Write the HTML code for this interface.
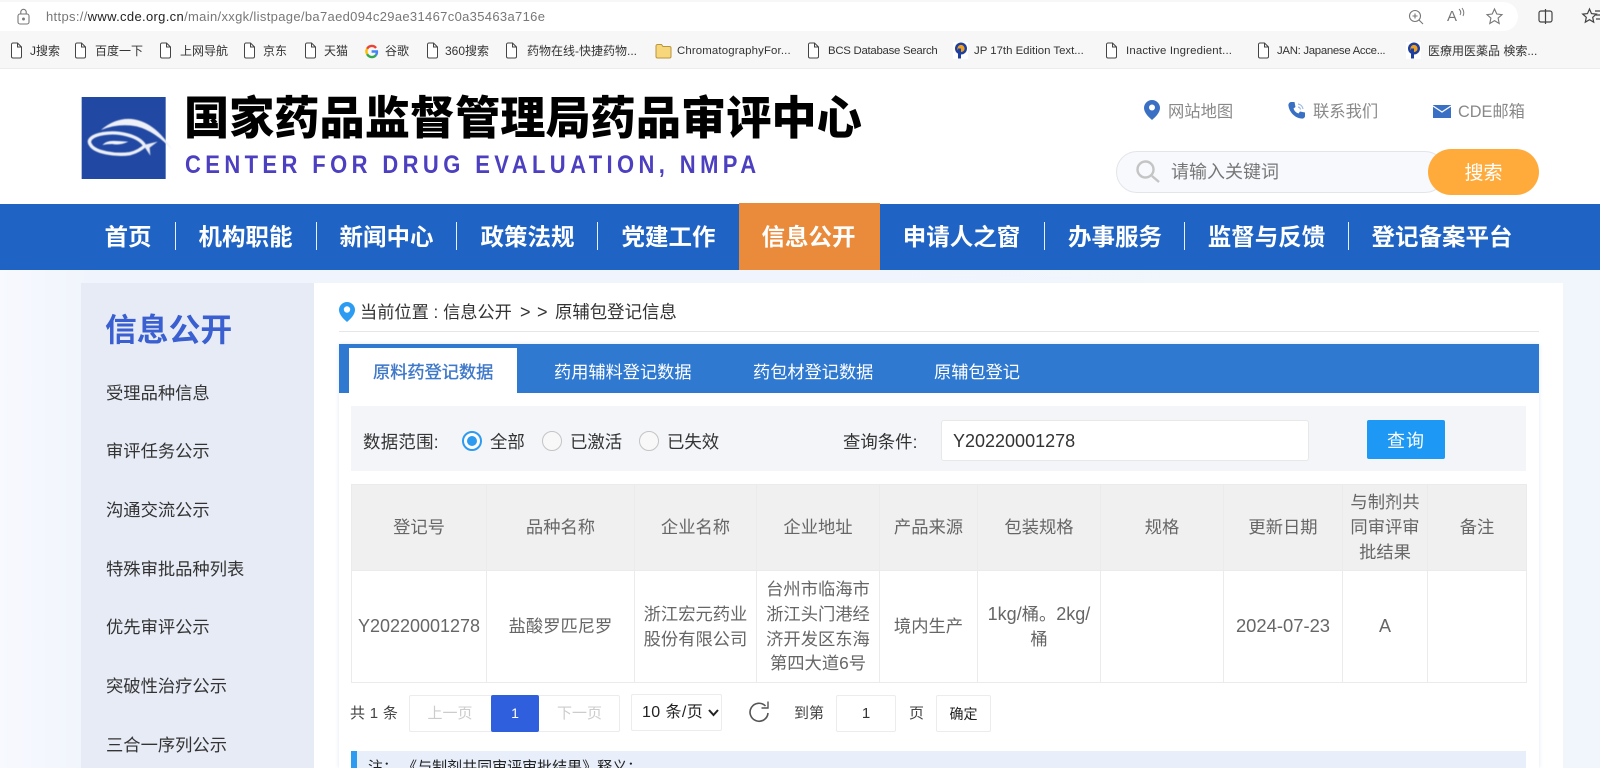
<!DOCTYPE html>
<html lang="zh-CN"><head><meta charset="utf-8"><title>国家药品监督管理局药品审评中心</title>
<style>
*{box-sizing:border-box}
html,body{margin:0;padding:0;width:1600px;height:768px;overflow:hidden;background:#fff}
body{position:relative;font-family:"Liberation Sans","Noto Sans CJK SC",sans-serif;color:#333}
.a{position:absolute;white-space:nowrap;line-height:24px}
.b{position:absolute}
svg{position:absolute;overflow:visible}
.bm{font-size:12px;color:#333;top:39px}
.nav{font-size:23.5px;font-weight:700;color:#fff;top:221px;line-height:32px;text-align:center;transform:translateX(-50%)}
.sep{position:absolute;width:1px;height:28px;top:222px;background:#e8f0fb}
.side{font-size:17.3px;left:106px;color:#333}
.tab{font-size:17.2px;color:#fff;top:359.5px}
.flt{font-size:17.4px;color:#333;top:430px}
table{position:absolute;left:351px;top:484px;width:1175px;height:198px;border-collapse:collapse;table-layout:fixed;font-size:17.3px;color:#666;line-height:24.7px;text-align:center}
td,th{border:1px solid #ebebeb;padding:0;font-weight:400;vertical-align:middle}
th{background:#f0f0f0;height:86px}
td{background:#fff;height:112px}
td .l{font-size:18px}
.box{position:absolute;background:#fff;border:1px solid #ececec;border-radius:2px}
.pg{font-size:15px;color:#444;top:702px}
</style></head><body>

<!-- browser chrome -->
<div class="b" style="left:0;top:0;width:1600px;height:69px;background:#f7f7f7;border-bottom:1px solid #ececec"></div>
<div class="b" style="left:-20px;top:2px;width:1538px;height:29px;background:#fff;border-radius:15px"></div>
<svg style="left:17px;top:9px" width="13" height="16" fill="none" stroke="#777" stroke-width="1.1"><rect x="1" y="5" width="11" height="10" rx="2"/><path d="M3.8 5V3a2.7 2.7 0 0 1 5.4 0v2"/><circle cx="6.5" cy="10" r=".9" fill="#777"/></svg>
<div class="a" style="left:46px;top:5px;font-size:13px;color:#777;letter-spacing:.33px">https://<span style="color:#222">www.cde.org.cn</span>/main/xxgk/listpage/ba7aed094c29ae31467c0a35463a716e</div>
<svg style="left:1408px;top:9px" width="16" height="16" fill="none" stroke="#777" stroke-width="1.1"><circle cx="7" cy="7" r="5.5"/><path d="M11 11l4 4M7 4.5v5M4.5 7h5"/></svg>
<div class="a" style="left:1447px;top:5px;font-size:15px;color:#777">A</div>
<svg style="left:1458px;top:8px" width="8" height="10" fill="none" stroke="#777"><path d="M1 1q3 3 1 6M4 0q3 4 1 8"/></svg>
<svg style="left:1486px;top:8px" width="17" height="17" fill="none" stroke="#777" stroke-width="1.1"><path d="M8.5 1l2.3 5 5.2.6-3.9 3.5 1.1 5.4-4.7-2.8-4.7 2.8 1.1-5.400L1 6.600 6.200 6z"/></svg>
<svg style="left:1538px;top:9px" width="15" height="15" fill="none" stroke="#444" stroke-width="1.2"><rect x="1" y="2" width="13" height="11" rx="2"/><path d="M7.5 0v15"/></svg>
<svg style="left:1582px;top:8px" width="18" height="17" fill="none" stroke="#444" stroke-width="1.2"><path d="M7.5 1l2 4.6 4.8.5-3.600 3.200 1 4.900-4.200-2.500-4.200 2.500 1-4.900L.7 6.100l4.800-.5z"/><path d="M13 3h5M14 7h4M14 11h4"/></svg>

<svg width="0" height="0" style="left:0;top:0"><defs><g id="f"><path d="M1.5 2.500a1.500 1.500 0 0 1 1.500-1.500h4.500l4 4v9.500a1.500 1.500 0 0 1-1.500 1.500h-7a1.500 1.500 0 0 1-1.500-1.500z M7.500 1v4h4" fill="#fff" stroke="#444" stroke-width="1"/></g>
<g id="p"><rect width="15" height="17" fill="#fff"/><circle cx="8" cy="6.500" r="6" fill="#1f3f9c"/><circle cx="8" cy="6.500" r="3.600" fill="#f0a020"/><path d="M6.500 6.500v10" stroke="#1f3f9c" stroke-width="3"/></g>
<filter id="bl" x="-10%" y="-10%" width="120%" height="120%"><feGaussianBlur stdDeviation="1.600"/></filter></defs></svg>

<svg style="left:10px;top:42px" width="14" height="18"><use href="#f"/></svg><div class="a bm" style="left:30px">J搜索</div>
<svg style="left:74px;top:42px" width="14" height="18"><use href="#f"/></svg><div class="a bm" style="left:95px">百度一下</div>
<svg style="left:159px;top:42px" width="14" height="18"><use href="#f"/></svg><div class="a bm" style="left:180px">上网导航</div>
<svg style="left:243px;top:42px" width="14" height="18"><use href="#f"/></svg><div class="a bm" style="left:263px">京东</div>
<svg style="left:304px;top:42px" width="14" height="18"><use href="#f"/></svg><div class="a bm" style="left:324px">天猫</div>
<svg style="left:365px;top:45px" width="13" height="13" fill="none" stroke-width="2.4"><path d="M11 3A5.2 5.2 0 0 0 2.2 3.8" stroke="#ea4335"/><path d="M2.2 3.8a5.2 5.2 0 0 0 0 5.4" stroke="#fbbc05"/><path d="M2.2 9.2A5.2 5.2 0 0 0 11 10" stroke="#34a853"/><path d="M11 10a5 5 0 0 0 .9-3.5H6.6" stroke="#4285f4"/></svg><div class="a bm" style="left:385px">谷歌</div>
<svg style="left:426px;top:42px" width="14" height="18"><use href="#f"/></svg><div class="a bm" style="left:445px">360搜索</div>
<svg style="left:505px;top:42px" width="14" height="18"><use href="#f"/></svg><div class="a bm" style="left:527px">药物在线-快捷药物...</div>
<svg style="left:655px;top:43px" width="17" height="16"><path d="M1 3a1.5 1.5 0 0 1 1.5-1.5h4L8 3.5h6.5A1.5 1.5 0 0 1 16 5v8.500a1.500 1.500 0 0 1-1.500 1.500h-12A1.500 1.500 0 0 1 1 13.500z" fill="#f6d77c" stroke="#b9963c"/></svg><div class="a bm" style="left:677px;font-size:11.4px;letter-spacing:.15px">ChromatographyFor...</div>
<svg style="left:807px;top:42px" width="14" height="18"><use href="#f"/></svg><div class="a bm" style="left:828px;font-size:11.4px;letter-spacing:-.27px">BCS Database Search</div>
<svg style="left:953px;top:42px" width="15" height="18"><use href="#p"/></svg><div class="a bm" style="left:974px;font-size:11.4px">JP 17th Edition Text...</div>
<svg style="left:1105px;top:42px" width="14" height="18"><use href="#f"/></svg><div class="a bm" style="left:1126px;font-size:11.4px;letter-spacing:.16px">Inactive Ingredient...</div>
<svg style="left:1257px;top:42px" width="14" height="18"><use href="#f"/></svg><div class="a bm" style="left:1277px;font-size:11.4px;letter-spacing:-.3px">JAN: Japanese Acce...</div>
<svg style="left:1406px;top:42px" width="15" height="18"><use href="#p"/></svg><div class="a bm" style="left:1428px">医療用医薬品 検索...</div>

<!-- header -->
<svg style="left:75px;top:95px" width="100" height="90" viewBox="0 0 300 270">
<rect x="20" y="6" width="252" height="246" fill="#2148a2"/>
<g filter="url(#bl)">
<path d="M78 105Q120 68 170 72Q240 80 292 165Q240 108 185 94Q130 84 78 105z" fill="#eef1f8"/>
<path d="M208 150C190 122 130 108 85 116C50 122 36 135 47 150C60 172 120 182 165 176C185 171 200 162 212 150" fill="none" stroke="#eef1f8" stroke-width="10"/>
<path d="M205 150L248 140L224 158L226 182z" fill="#e8ecf6"/>
<path d="M82 150Q95 135 125 138L160 140Q135 152 112 147Q95 147 82 150z" fill="#f3f5fb"/>
</g>
</svg>
<div class="a" style="left:184px;top:89px;font-size:45.2px;line-height:60px;font-weight:900;color:#000">国家药品监督管理局药品审评中心</div>
<svg style="left:185px;top:150px" width="580" height="30"><text transform="scale(.88,1)" x="0" y="23" font-family="Liberation Sans" font-weight="700" font-size="25" fill="#4c3fc0" textLength="649" lengthAdjust="spacing">CENTER FOR DRUG EVALUATION, NMPA</text></svg>

<svg style="left:1144px;top:100px" width="16" height="20"><path d="M8 0a8 8 0 0 1 8 8c0 4.5-4.5 9-8 12-3.500-3-8-7.500-8-12a8 8 0 0 1 8-8z" fill="#3a70c4"/><circle cx="8" cy="7.500" r="3" fill="#fff"/></svg>
<div class="a" style="left:1168px;top:99.5px;font-size:16.3px;color:#888">网站地图</div>
<svg style="left:1288px;top:101px" width="18" height="19"><path d="M3 1l3.500 0 1 5-2 1.500c.8 2.500 2.500 4.200 5 5l1.500-2 5 1v3.500c0 1.500-1.500 3-3.500 2.500C7 17 1.500 11.500.5 5 0 3 1.500 1 3 1z" fill="#3a70c4"/><path d="M10 3a6 6 0 0 1 5 5M10 6a3 3 0 0 1 2.500 2.500" fill="none" stroke="#9db9e4" stroke-width="1.200"/></svg>
<div class="a" style="left:1313px;top:99.5px;font-size:16.3px;color:#888">联系我们</div>
<svg style="left:1433px;top:105px" width="18" height="13"><rect width="18" height="13" fill="#3a70c4"/><path d="M0 1l9 6 9-6" fill="none" stroke="#fff" stroke-width="1.300"/></svg>
<div class="a" style="left:1458px;top:99.5px;font-size:16.3px;color:#888">CDE邮箱</div>

<div class="b" style="left:1116px;top:151px;width:330px;height:42px;background:#f7f9fd;border:1px solid #e3e5ea;border-radius:21px"></div>
<svg style="left:1136px;top:160px" width="24" height="23" fill="none" stroke="#c4c4c4"><circle cx="9.500" cy="9.500" r="8" stroke-width="2.400"/><path d="M16 16l7 6" stroke-width="2.400"/></svg>
<div class="a" style="left:1171px;top:160px;font-size:18px;color:#777">请输入关键词</div>
<div class="b" style="left:1428px;top:149px;width:111px;height:46px;background:#ffab3c;border-radius:23px;color:#fff;font-size:19px;line-height:49px;text-align:center">搜索</div>

<!-- nav -->
<div class="b" style="left:0;top:204px;width:1600px;height:66px;background:#1f63c4"></div>
<div class="b" style="left:739px;top:203px;width:141px;height:67px;background:#ea8a3b"></div>
<div class="sep" style="left:175px"></div><div class="sep" style="left:316px"></div><div class="sep" style="left:456px"></div><div class="sep" style="left:597px"></div><div class="sep" style="left:1044px"></div><div class="sep" style="left:1184px"></div><div class="sep" style="left:1348px"></div>
<div class="a nav" style="left:128px">首页</div>
<div class="a nav" style="left:245.5px">机构职能</div>
<div class="a nav" style="left:386.5px">新闻中心</div>
<div class="a nav" style="left:527.5px">政策法规</div>
<div class="a nav" style="left:668.5px">党建工作</div>
<div class="a nav" style="left:808.5px">信息公开</div>
<div class="a nav" style="left:961.5px">申请人之窗</div>
<div class="a nav" style="left:1115px">办事服务</div>
<div class="a nav" style="left:1266.5px">监督与反馈</div>
<div class="a nav" style="left:1442px">登记备案平台</div>

<!-- body background -->
<div class="b" style="left:0;top:270px;width:1600px;height:498px;background:linear-gradient(90deg,#f7f9fe,#f0f4fc 6%,#f1f5fc)"></div>

<!-- sidebar -->
<div class="b" style="left:81px;top:283px;width:233px;height:485px;background:#e7ebf5"></div>
<div class="a" style="left:105px;top:310px;font-size:31.8px;line-height:40px;font-weight:700;color:#3a5fd0">信息公开</div>
<div class="a side" style="top:381px">受理品种信息</div>
<div class="a side" style="top:439px">审评任务公示</div>
<div class="a side" style="top:497.5px">沟通交流公示</div>
<div class="a side" style="top:556.5px">特殊审批品种列表</div>
<div class="a side" style="top:615px">优先审评公示</div>
<div class="a side" style="top:674px">突破性治疗公示</div>
<div class="a side" style="top:733px">三合一序列公示</div>

<!-- main -->
<div class="b" style="left:314px;top:283px;width:1249px;height:485px;background:#fff"></div>
<svg style="left:339px;top:302px" width="16" height="20"><path d="M8 0a8 8 0 0 1 8 8c0 4.500-4.500 9-8 12-3.500-3-8-7.500-8-12a8 8 0 0 1 8-8z" fill="#2b9cf2"/><circle cx="8" cy="7.500" r="3.200" fill="#fff"/></svg>
<div class="a" style="left:360px;top:299.5px;font-size:17.2px;color:#333">当前位置 : 信息公开</div>
<div class="a" style="left:520px;top:299.5px;font-size:18px;color:#333">&gt;</div>
<div class="a" style="left:537px;top:299.5px;font-size:18px;color:#333">&gt;</div>
<div class="a" style="left:555px;top:299.5px;font-size:17.4px;color:#333">原辅包登记信息</div>
<div class="b" style="left:339px;top:331px;width:1200px;height:1px;background:#e6e6e6"></div>

<!-- card -->
<div class="b" style="left:339px;top:344px;width:1200px;height:424px;background:#fff;box-shadow:0 0 4px #dfe6f2"></div>
<div class="b" style="left:339px;top:344px;width:1200px;height:49px;background:#2f79d1"></div>
<div class="b" style="left:349px;top:348px;width:168px;height:45px;background:#fff"></div>
<div class="a tab" style="left:373px;color:#3f78c9;-webkit-text-stroke:.35px #3f78c9">原料药登记数据</div>
<div class="a tab" style="left:554px">药用辅料登记数据</div>
<div class="a tab" style="left:753px">药包材登记数据</div>
<div class="a tab" style="left:934px">原辅包登记</div>

<!-- filter -->
<div class="b" style="left:351px;top:406px;width:1175px;height:65px;background:#f3f5f9"></div>
<div class="a flt" style="left:363px;letter-spacing:.3px">数据范围:</div>
<div class="b" style="left:462px;top:431px;width:20px;height:20px;border:2px solid #2d9bf0;border-radius:50%;background:#fff"></div>
<div class="b" style="left:467px;top:436px;width:10px;height:10px;border-radius:50%;background:#2d9bf0"></div>
<div class="a flt" style="left:490px">全部</div>
<div class="b" style="left:542px;top:431px;width:20px;height:20px;border:1px solid #c4c4c4;border-radius:50%;background:#f8f8f8"></div>
<div class="a flt" style="left:570px">已激活</div>
<div class="b" style="left:639px;top:431px;width:20px;height:20px;border:1px solid #c4c4c4;border-radius:50%;background:#f8f8f8"></div>
<div class="a flt" style="left:667px">已失效</div>
<div class="a flt" style="left:843px">查询条件:</div>
<div class="box" style="left:941px;top:420px;width:368px;height:41px;border-color:#e8e8e8;border-radius:3px"></div>
<div class="a" style="left:953px;top:429px;font-size:18px;color:#333">Y20220001278</div>
<div class="b" style="left:1367px;top:420px;width:78px;height:39px;background:#1e98f5;border-radius:2px;color:#fff;font-size:18px;line-height:42px;text-align:center;letter-spacing:1px">查询</div>

<!-- table -->
<table>
<colgroup><col style="width:135px"><col style="width:148px"><col style="width:122px"><col style="width:123px"><col style="width:98px"><col style="width:123px"><col style="width:123px"><col style="width:119px"><col style="width:85px"><col style="width:99px"></colgroup>
<tr><th>登记号</th><th>品种名称</th><th>企业名称</th><th>企业地址</th><th>产品来源</th><th>包装规格</th><th>规格</th><th>更新日期</th><th>与制剂共<br>同审评审<br>批结果</th><th>备注</th></tr>
<tr><td><span class="l">Y20220001278</span></td><td>盐酸罗匹尼罗</td><td>浙江宏元药业<br>股份有限公司</td><td>台州市临海市<br>浙江头门港经<br>济开发区东海<br>第四大道6号</td><td>境内生产</td><td><span class="l">1kg/</span>桶。<span class="l">2kg/</span><br>桶</td><td></td><td><span class="l" style="font-size:18.4px">2024-07-23</span></td><td><span class="l">A</span></td><td></td></tr>
</table>

<!-- pagination -->
<div class="a pg" style="left:350px;letter-spacing:.3px">共 1 条</div>
<div class="box" style="left:409px;top:695px;width:211px;height:37px"></div>
<div class="a pg" style="left:409px;width:82px;text-align:center;color:#ccc">上一页</div>
<div class="b" style="left:491px;top:695px;width:48px;height:37px;background:#2f5fdc;border-radius:2px;color:#fff;font-size:14px;line-height:37px;text-align:center">1</div>
<div class="a pg" style="left:539px;width:81px;text-align:center;color:#ccc">下一页</div>
<div class="box" style="left:631px;top:694px;width:91px;height:37px"></div>
<div class="a" style="left:642px;top:701px;font-size:16px;letter-spacing:.4px;color:#222">10 条/页</div>
<svg style="left:708px;top:709px" width="11" height="8" fill="none" stroke="#222" stroke-width="2"><path d="M1 1l4.500 5L10 1"/></svg>
<svg style="left:748px;top:700px" width="23" height="24" fill="none" stroke="#555" stroke-width="1.600"><path d="M17.500 6A9 9 0 1 0 20 13"/><path d="M20 1.500V8h-6.500" stroke-width="1.400"/></svg>
<div class="a pg" style="left:794px">到第</div>
<div class="box" style="left:836px;top:695px;width:60px;height:37px"></div>
<div class="a" style="left:836px;top:702px;width:60px;text-align:center;font-size:15px;color:#333">1</div>
<div class="a pg" style="left:909px">页</div>
<div class="box" style="left:936px;top:695px;width:55px;height:37px"></div>
<div class="a" style="left:936px;top:702px;width:55px;text-align:center;font-size:14px;color:#222">确定</div>

<!-- note -->
<div class="b" style="left:351px;top:751px;width:1175px;height:17px;background:#e8effb;overflow:hidden">
<div class="b" style="left:0;top:0;width:6px;height:17px;background:#2d9bf0"></div>
<div class="a" style="left:17px;top:5px;font-size:15px;color:#222">注：&nbsp;《与制剂共同审评审批结果》释义：</div>
</div>
</body></html>
